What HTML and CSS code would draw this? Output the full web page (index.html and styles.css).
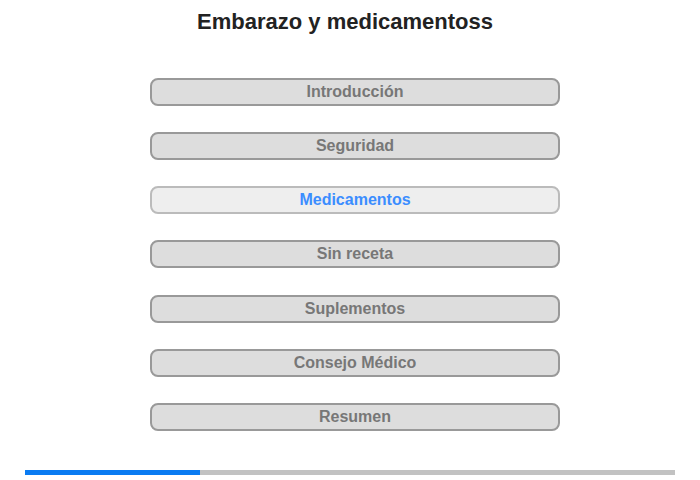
FILE: index.html
```html
<!DOCTYPE html>
<html lang="es">
<head>
    <meta charset="UTF-8">
    <meta name="viewport" content="width=device-width, initial-scale=1.0">
    <title>Embarazo y medicamentoss</title>
    <link rel="stylesheet" href="styles.css">
</head>
<body>

<!-- Title -->
<h1 class="page-title">Embarazo y medicamentoss</h1>

<!-- Section menu -->
<div class="menu">
    <button class="menu-item">Introducción</button>
    <button class="menu-item">Seguridad</button>
    <button class="menu-item active">Medicamentos</button>
    <button class="menu-item">Sin receta</button>
    <button class="menu-item">Suplementos</button>
    <button class="menu-item">Consejo Médico</button>
    <button class="menu-item">Resumen</button>
</div>

<!-- Progress -->
<div class="progress">
    <div class="progress-fill" style="width: 26.9%;"></div>
</div>

</body>
</html>
```

FILE: styles.css
```css
* {
    box-sizing: border-box;
}

body {
    font-family: "Liberation Sans", Arial, Helvetica, sans-serif;
    margin: 0;
    width: 700px;
    height: 480px;
    background-color: white;
}

/* Title */
.page-title {
    margin: 0;
    padding: 9px 10px 0 0;
    font-size: 22px;
    line-height: 25px;
    text-align: center;
    color: #222;
}

/* Menu buttons */
.menu {
    display: flex;
    flex-direction: column;
    align-items: center;
    gap: 26.17px;
    padding: 44px 0 0 10px;
}

.menu-item {
    width: 410px;
    height: 28px;
    padding: 0;
    border: 2px solid #999;
    border-radius: 8px;
    background-color: #ddd;
    color: #777;
    font-family: inherit;
    font-size: 16px;
    font-weight: bold;
    cursor: pointer;
}

.menu-item.active {
    border-color: #bbb;
    background-color: #eee;
    color: #3b8dff;
}

/* Progress bar */
.progress {
    margin: 39px 25px 0 25px;
    height: 5px;
    background-color: #c2c2c2;
}

.progress-fill {
    height: 100%;
    background-color: #0a7bf2;
}
```
